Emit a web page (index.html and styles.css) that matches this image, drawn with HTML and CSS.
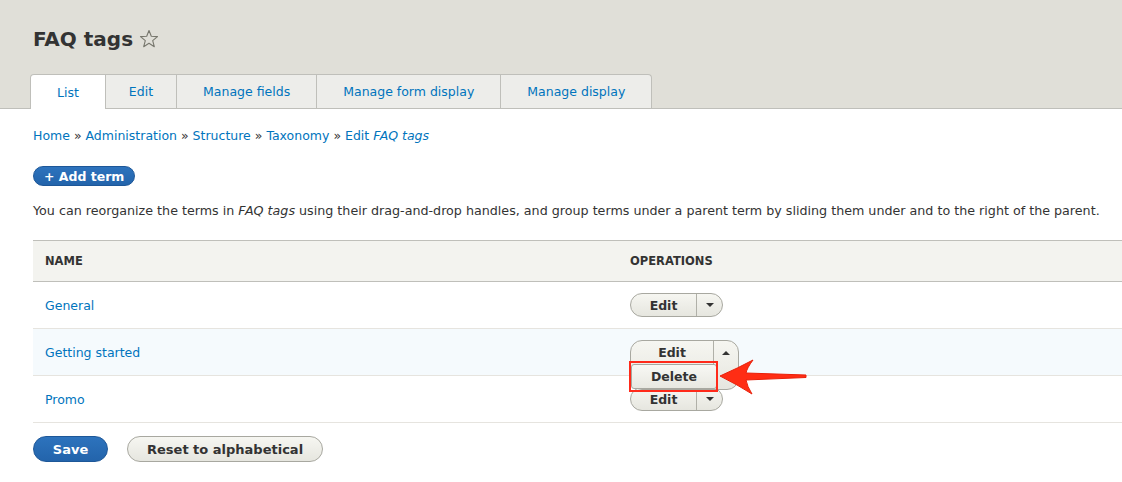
FILE: index.html
```html
<!DOCTYPE html>
<html>
<head>
<meta charset="utf-8">
<link rel="stylesheet" href="styles.css">
</head>
<body>
<header class="page-head">
  <h1 class="title">FAQ tags <svg class="star" width="20" height="20" viewBox="0 0 20 20"><polygon points="10,1.5 12.3,7.3 18.5,7.6 13.7,11.6 15.3,17.7 10,14.3 4.7,17.7 6.3,11.6 1.5,7.6 7.7,7.3" fill="none" stroke="#77776d" stroke-width="1.1" stroke-linejoin="round"/></svg></h1>
  <ul class="tabs">
    <li class="tab active"><a>List</a></li>
    <li class="tab edit"><a>Edit</a></li>
    <li class="tab"><a>Manage fields</a></li>
    <li class="tab"><a>Manage form display</a></li>
    <li class="tab last"><a>Manage display</a></li>
  </ul>
</header>
<main class="content">
  <nav class="crumbs"><a>Home</a> » <a>Administration</a> » <a>Structure</a> » <a>Taxonomy</a> » <a>Edit <em>FAQ tags</em></a></nav>
  <div class="actions"><span class="btn-add">+ Add term</span></div>
  <p class="desc">You can reorganize the terms in <em>FAQ tags</em> using their drag-and-drop handles, and group terms under a parent term by sliding them under and to the right of the parent.</p>
  <div class="table">
    <div class="row head"><div class="c-name">NAME</div><div class="c-ops">OPERATIONS</div></div>
    <div class="row"><div class="c-name"><a>General</a></div><div class="c-ops"><span class="drop"><span class="drop-main">Edit</span><span class="drop-tog"><span class="tri-down"></span></span></span></div></div>
    <div class="row hl"><div class="c-name"><a>Getting started</a></div><div class="c-ops open-cell">
      <div class="drop-open">
        <div class="open-top"><span class="open-main">Edit</span><span class="open-tog"><span class="tri-up"></span></span></div>
        <div class="open-item"><span class="del">Delete</span></div>
      </div>
      <div class="redbox"></div>
      <svg class="arrow" width="90" height="38" viewBox="0 0 90 38"><path d="M2,18 Q20,10 35,2 Q29,10 28,15 L88,17 L88,19.5 L28,22 Q29,28 34,36 Q20,27 2,18 Z" fill="#ff2d14" stroke="#e8200a" stroke-width="1" stroke-linejoin="round"/></svg>
    </div></div>
    <div class="row"><div class="c-name"><a>Promo</a></div><div class="c-ops"><span class="drop"><span class="drop-main">Edit</span><span class="drop-tog"><span class="tri-down"></span></span></span></div></div>
  </div>
  <div class="form-actions"><span class="btn-save">Save</span><span class="btn-reset">Reset to alphabetical</span></div>
</main>
</body>
</html>
```

FILE: styles.css
```css
* { box-sizing: border-box; }
body {
  margin: 0;
  font-family: "DejaVu Sans", Verdana, sans-serif;
  font-size: 12px;
  color: #333;
  background: #fff;
  overflow: hidden;
}
a { color: #0074bd; text-decoration: none; }
.page-head {
  background: #e0dfd8;
  border-bottom: 1px solid #bfbfba;
  padding: 24px 0 0 30px;
  height: 109px;
}
.title {
  margin: 0 0 0 3px;
  font-size: 20px;
  line-height: 30px;
  font-weight: bold;
  color: #333;
  display: flex;
  align-items: center;
  gap: 6px;
}
.tabs {
  list-style: none;
  margin: 20px 0 0 0;
  padding: 0;
  display: flex;
}
.tab {
  height: 34px;
  border: 1px solid #bfbfba;
  border-bottom: none;
  border-left: none;
  background: #ededea;
  display: flex;
  align-items: center;
  padding: 0 26px;
  font-size: 12.5px;
}
.tab a { color: #0074bd; }
.tab.edit { padding: 0 23px; }
.tab.active {
  background: #fff;
  border-left: 1px solid #bfbfba;
  border-top-left-radius: 4px;
  height: 35px;
  padding: 0 26px;
}
.tab.last { border-top-right-radius: 4px; }
.content { padding: 0 0 0 33px; }
.crumbs { margin-top: 18px; line-height: 18px; font-size: 12.5px; }
.crumbs em { font-style: italic; }
.actions { margin-top: 21px; height: 20px; }
.btn-add {
  display: inline-flex;
  align-items: center;
  height: 20px;
  padding: 0 10px;
  border-radius: 12px;
  background: linear-gradient(#2d73bd, #2364ab);
  border: 1px solid #1d5798;
  color: #fff;
  font-weight: bold;
  font-size: 12.5px;
}
.desc { margin: 16px 0 0 0; line-height: 18px; font-size: 12.7px; }
.table { margin-top: 20px; }
.row {
  display: flex;
  align-items: center;
  height: 47px;
  border-bottom: 1px solid #e6e4df;
}
.row.head {
  height: 42px;
  background: #f3f3ef;
  border-top: 1px solid #bfbfba;
  border-bottom: 1px solid #bfbfba;
  font-weight: bold;
  color: #333;
}
.row.hl { background: #f5fafd; }
.c-name { width: 597px; padding-left: 12px; font-size: 12.5px; }
.row.head .c-name, .row.head .c-ops { font-size: 11.5px; }
.c-ops { flex: 1; font-size: 12.5px; }
.open-cell { position: relative; height: 100%; }
.drop {
  display: inline-flex;
  height: 24px;
  border: 1px solid #a8a8a0;
  border-radius: 12px;
  background: linear-gradient(#f6f6f1, #e6e6df);
  font-weight: bold;
  color: #333;
  overflow: hidden;
}
.drop-main { width: 66px; display: flex; align-items: center; justify-content: center; border-right: 1px solid #b0b0a8; }
.drop-tog { width: 25px; display: flex; align-items: center; justify-content: center; }
.tri-down { width: 0; height: 0; border-left: 4px solid transparent; border-right: 4px solid transparent; border-top: 4px solid #333; }
.tri-up { width: 0; height: 0; border-left: 4px solid transparent; border-right: 4px solid transparent; border-bottom: 4px solid #333; }
.drop-open {
  position: absolute;
  left: 0;
  top: 11px;
  width: 109px;
  height: 50px;
  border: 1px solid #a8a8a0;
  border-radius: 12px;
  background: linear-gradient(#f6f6f1, #e6e6df);
  z-index: 2;
}
.open-top { display: flex; height: 23px; }
.open-main { width: 82px; display: flex; align-items: center; justify-content: center; font-weight: bold; color: #333; }
.open-tog { flex: 1; display: flex; align-items: center; justify-content: center; border-left: 1px solid #b0b0a8; height: 23px; }
.open-item { display: flex; }
.del {
  width: 86px;
  height: 25px;
  border: 1px solid #a8a8a0;
  border-radius: 3px;
  background: linear-gradient(#f8f8f4, #e8e8e1);
  display: flex;
  align-items: center;
  justify-content: center;
  font-weight: bold;
  color: #333;
}
.redbox {
  position: absolute;
  left: -1px;
  top: 32px;
  width: 89px;
  height: 31px;
  border: 2px solid #ff2a1a;
  z-index: 3;
}
.arrow {
  position: absolute;
  left: 88px;
  top: 29px;
  z-index: 3;
}
.form-actions { display: flex; gap: 19px; margin-top: 13px; }
.btn-save {
  width: 75px; height: 26px;
  border-radius: 13px;
  background: linear-gradient(#2d73bd, #2364ab);
  border: 1px solid #1d5798;
  color: #fff; font-weight: bold; font-size: 13px;
  display: flex; align-items: center; justify-content: center;
}
.btn-reset {
  height: 26px; padding: 0 19px;
  border-radius: 13px;
  background: linear-gradient(#f6f6f1, #e6e6df);
  border: 1px solid #a8a8a0;
  color: #333; font-weight: bold; font-size: 13px;
  display: flex; align-items: center; justify-content: center;
}
```
